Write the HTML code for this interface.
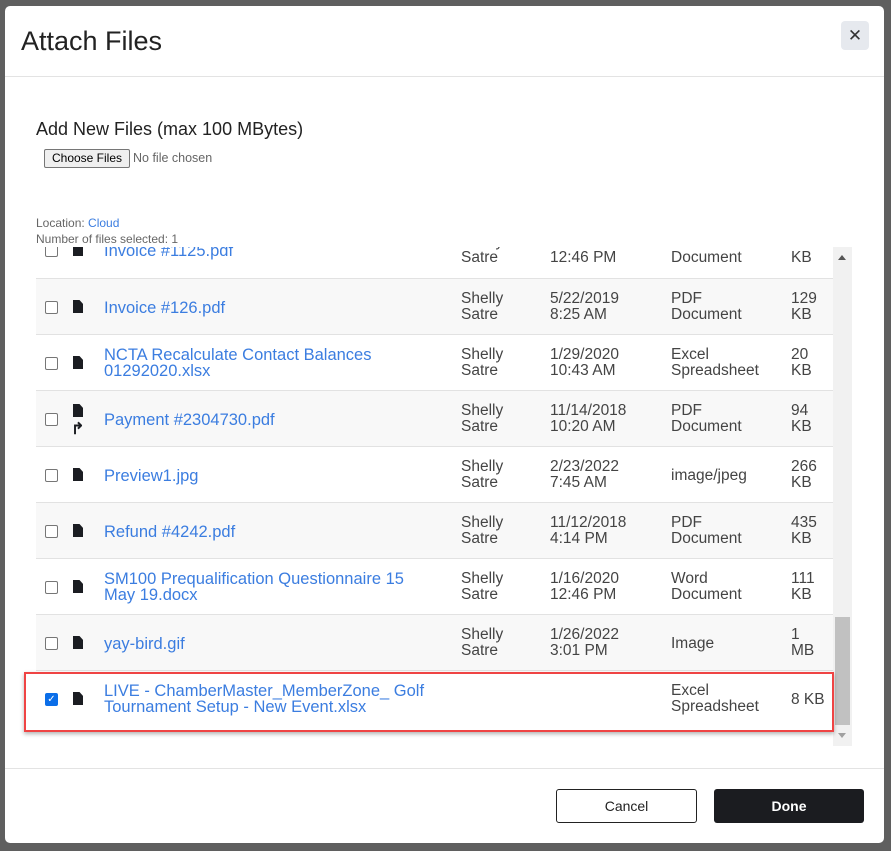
<!DOCTYPE html><html><head><style>
body{margin:0;width:891px;height:851px;background:#5f5f5f;font-family:"Liberation Sans",sans-serif;overflow:hidden;position:relative}
.m{position:absolute;left:5px;top:6px;width:879px;height:837px;background:#fff;border-radius:5px}
.a{position:absolute}
.t{font-size:15.5px;line-height:16px;color:#444}
.l{color:#3b7de0;font-size:16.5px;line-height:16px}
.row{position:absolute;left:0;width:797px;height:56px;border-top:1px solid #e2e2e2;box-sizing:border-box}
.cb{position:absolute;left:9px;width:11px;height:11px;border:1px solid #767676;border-radius:2px;background:#fff}
.ic{position:absolute;left:37px;width:10px;height:13px;background:#1b1d22;clip-path:polygon(0 0,65% 0,100% 30%,100% 100%,0 100%)}
</style></head><body>
<div class="m">
<div class="a" style="left:16px;top:20px;font-size:27px;color:#222">Attach Files</div>
<div class="a" style="left:836px;top:15px;width:28px;height:29px;background:#e6e9ee;border-radius:4px;text-align:center;line-height:29px;font-size:17px;color:#333">✕</div>
<div class="a" style="left:0;top:70px;width:879px;border-top:1px solid #e3e3e3"></div>
<div class="a" style="left:31px;top:113px;font-size:18px;color:#222">Add New Files (max 100 MBytes)</div>
<div class="a" style="left:39px;top:143px;width:84px;height:17px;border:1px solid #767676;border-radius:2px;background:#efefef;font-size:12px;line-height:17px;text-align:center;color:#000">Choose Files</div>
<div class="a" style="left:128px;top:145px;font-size:12.5px;color:#666">No file chosen</div>
<div class="a" style="left:31px;top:209px;font-size:12px;color:#666;line-height:16px">Location: <span style="color:#3b7de0">Cloud</span><br>Number of files selected: 1</div>
</div>
<div class="a" style="left:36px;top:247px;width:816px;height:499px;overflow:hidden">
<div class="a" style="left:797px;top:0;width:19px;height:499px;background:#f1f1f1"></div>
<div class="a" style="left:799px;top:370px;width:15px;height:108px;background:#c1c1c1"></div>
<div class="a" style="left:802px;top:8px;border:4px solid transparent;border-bottom:5px solid #555;border-top:0"></div>
<div class="a" style="left:802px;top:486px;border:4px solid transparent;border-top:5px solid #a0a0a0;border-bottom:0"></div>
</div>
<div class="a" style="left:36px;top:247px;width:797px;height:499px;overflow:hidden">
<div class="row" style="top:-25px;border:0"><div class="cb" style="top:22px"></div><div class="ic" style="top:21px"></div><div class="a l" style="left:68px;top:21px">Invoice #1125.pdf</div><div class="a t" style="left:425px;top:12px">Shelly<br>Satre</div><div class="a t" style="left:514px;top:12px">1/16/2020<br>12:46 PM</div><div class="a t" style="left:635px;top:12px">PDF<br>Document</div><div class="a t" style="left:755px;top:12px">131<br>KB</div></div>
<div class="row" style="top:31px;background:#f8f8f8"><div class="cb" style="top:22px"></div><div class="ic" style="top:21px"></div><div class="a l" style="left:68px;top:21px">Invoice #126.pdf</div><div class="a t" style="left:425px;top:12px">Shelly<br>Satre</div><div class="a t" style="left:514px;top:12px">5/22/2019<br>8:25 AM</div><div class="a t" style="left:635px;top:12px">PDF<br>Document</div><div class="a t" style="left:755px;top:12px">129<br>KB</div></div>
<div class="row" style="top:87px"><div class="cb" style="top:22px"></div><div class="ic" style="top:21px"></div><div class="a l" style="left:68px;top:12px">NCTA Recalculate Contact Balances<br>01292020.xlsx</div><div class="a t" style="left:425px;top:12px">Shelly<br>Satre</div><div class="a t" style="left:514px;top:12px">1/29/2020<br>10:43 AM</div><div class="a t" style="left:635px;top:12px">Excel<br>Spreadsheet</div><div class="a t" style="left:755px;top:12px">20<br>KB</div></div>
<div class="row" style="top:143px;background:#f8f8f8"><div class="cb" style="top:22px"></div><div class="ic" style="top:13px"></div><div class="a" style="left:35px;top:28px;font-size:16px;color:#1b1d22;font-weight:bold">↱</div><div class="a l" style="left:68px;top:21px">Payment #2304730.pdf</div><div class="a t" style="left:425px;top:12px">Shelly<br>Satre</div><div class="a t" style="left:514px;top:12px">11/14/2018<br>10:20 AM</div><div class="a t" style="left:635px;top:12px">PDF<br>Document</div><div class="a t" style="left:755px;top:12px">94<br>KB</div></div>
<div class="row" style="top:199px"><div class="cb" style="top:22px"></div><div class="ic" style="top:21px"></div><div class="a l" style="left:68px;top:21px">Preview1.jpg</div><div class="a t" style="left:425px;top:12px">Shelly<br>Satre</div><div class="a t" style="left:514px;top:12px">2/23/2022<br>7:45 AM</div><div class="a t" style="left:635px;top:21px">image/jpeg</div><div class="a t" style="left:755px;top:12px">266<br>KB</div></div>
<div class="row" style="top:255px;background:#f8f8f8"><div class="cb" style="top:22px"></div><div class="ic" style="top:21px"></div><div class="a l" style="left:68px;top:21px">Refund #4242.pdf</div><div class="a t" style="left:425px;top:12px">Shelly<br>Satre</div><div class="a t" style="left:514px;top:12px">11/12/2018<br>4:14 PM</div><div class="a t" style="left:635px;top:12px">PDF<br>Document</div><div class="a t" style="left:755px;top:12px">435<br>KB</div></div>
<div class="row" style="top:311px"><div class="cb" style="top:22px"></div><div class="ic" style="top:21px"></div><div class="a l" style="left:68px;top:12px">SM100 Prequalification Questionnaire 15<br>May 19.docx</div><div class="a t" style="left:425px;top:12px">Shelly<br>Satre</div><div class="a t" style="left:514px;top:12px">1/16/2020<br>12:46 PM</div><div class="a t" style="left:635px;top:12px">Word<br>Document</div><div class="a t" style="left:755px;top:12px">111<br>KB</div></div>
<div class="row" style="top:367px;background:#f8f8f8"><div class="cb" style="top:22px"></div><div class="ic" style="top:21px"></div><div class="a l" style="left:68px;top:21px">yay-bird.gif</div><div class="a t" style="left:425px;top:12px">Shelly<br>Satre</div><div class="a t" style="left:514px;top:12px">1/26/2022<br>3:01 PM</div><div class="a t" style="left:635px;top:21px">Image</div><div class="a t" style="left:755px;top:12px">1<br>MB</div></div>
<div class="row" style="top:423px"><div class="cb" style="top:22px;background:#0b6ee8;border-color:#0b6ee8;color:#fff;font-size:10px;line-height:11px;text-align:center">✓</div><div class="ic" style="top:21px"></div><div class="a l" style="left:68px;top:12px">LIVE - ChamberMaster_MemberZone_ Golf<br>Tournament Setup - New Event.xlsx</div><div class="a t" style="left:635px;top:12px">Excel<br>Spreadsheet</div><div class="a t" style="left:755px;top:21px">8 KB</div></div>
</div>
<div class="a" style="left:24px;top:672px;width:806px;height:56px;border:2px solid #ef4444;box-shadow:0 2px 4px rgba(0,0,0,.3)"></div>
<div class="a" style="left:5px;top:768px;width:879px;border-top:1px solid #e3e3e3"></div>
<div class="a" style="left:556px;top:789px;width:139px;height:32px;border:1px solid #222;border-radius:3px;text-align:center;line-height:32px;font-size:14px;color:#222">Cancel</div>
<div class="a" style="left:714px;top:789px;width:150px;height:34px;background:#1b1c20;border-radius:3px;text-align:center;line-height:34px;font-size:14px;color:#fff;font-weight:bold">Done</div>
</body></html>
